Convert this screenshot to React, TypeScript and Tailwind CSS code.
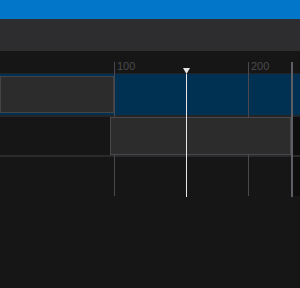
const App = () => {
  return (
    <div className="relative w-[300px] h-[288px] overflow-hidden bg-[#161616] font-['Liberation_Sans',sans-serif]">
      {/* title bar */}
      <div className="h-[19px] bg-[#0277c9]" />
      {/* toolbar */}
      <div className="h-[32px] bg-[#2d2d2f]" />

      {/* timeline */}
      <div className="relative">
        {/* ruler */}
        <div className="flex h-[23px] items-start border-b border-[#232325] pl-[117px] pt-[10px] text-[11px] leading-[11px] text-[#4a4a4c]">
          <span className="w-[134px]">100</span>
          <span>200</span>
        </div>

        {/* row 1 (selected) */}
        <div className="h-[43px] border-b-2 border-[#252527] bg-[#003152] py-[2px]">
          <div className="relative z-[2] h-[37px] w-[114px] border border-[#444448] bg-[#2c2c2c]" />
        </div>

        {/* row 2 */}
        <div className="flex h-[40px] border-b-2 border-[#2a2a2d] pl-[110px]">
          <div className="relative z-[2] h-[38px] w-[181px] border border-[#48484c] bg-[#2c2c2c]" />
          <div className="ml-[2px] flex-1 bg-[#0e0e0e]" />
        </div>

        {/* out of range area below tracks */}
        <div className="ml-[293px] h-[39px] bg-[#0e0e0e]" />

        {/* grid lines */}
        <div className="absolute left-[114px] top-[11px] h-[134px] w-px bg-[#4a4a4e] z-[1]" />
        <div className="absolute left-[248px] top-[11px] h-[134px] w-px bg-[#4a4a4e] z-[1]" />
        <div className="absolute left-[291px] top-[11px] h-[135px] w-[2px] bg-[#5e5e64] z-[3]" />

        {/* playhead */}
        <div className="absolute left-[183px] top-[17px] z-[4] flex flex-col items-center">
          <svg width="7" height="6" viewBox="0 0 7 6">
            <path d="M0 0H7L3.5 6Z" fill="#e6e6e6" />
          </svg>
          <div className="h-[123px] w-px bg-[#e6e6e6]" />
        </div>
      </div>
    </div>
  );
};

export default App;
